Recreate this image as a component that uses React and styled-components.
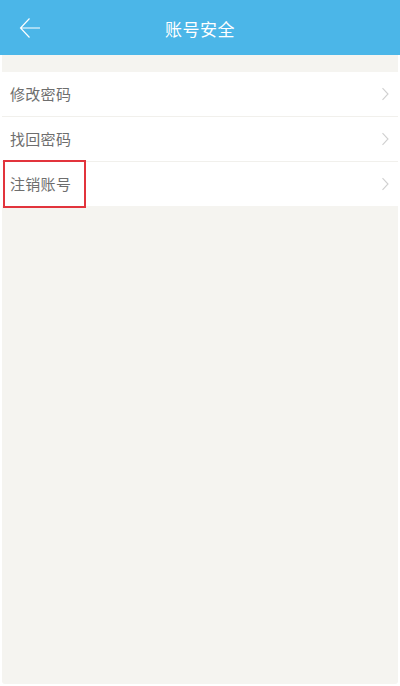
import React from "react";
import styled, { createGlobalStyle } from "styled-components";

const Global = createGlobalStyle`
  html, body { margin: 0; padding: 0; background: #ffffff; }
  body { font-family: "Noto Sans CJK SC", "Noto Sans", sans-serif; }
`;

const Screen = styled.div`
  width: 400px;
  height: 686px;
  display: flex;
  flex-direction: column;
  background: #ffffff;
  overflow: hidden;
`;

const Header = styled.header`
  height: 55px;
  flex: none;
  background: #4bb6e8;
  display: flex;
  align-items: center;
  justify-content: center;
  position: relative;
`;

const BackButton = styled.button`
  position: absolute;
  left: 18px;
  top: 16px;
  width: 24px;
  height: 24px;
  padding: 0;
  border: none;
  background: none;
  display: flex;
  align-items: center;
  justify-content: center;
`;

const Title = styled.h1`
  margin: 0;
  color: #ffffff;
  font-size: 17px;
  font-weight: 400;
  letter-spacing: 0.5px;
  line-height: 1;
  padding-top: 1px;
`;

const Body = styled.main`
  flex: 1;
  margin: 0 2px 2px 2px;
  background: #f5f4f0;
  border-radius: 0 0 3px 3px;
  padding-top: 17px;
  display: flex;
  flex-direction: column;
`;

const List = styled.ul`
  list-style: none;
  margin: 0;
  padding: 0;
  background: #ffffff;
`;

const Row = styled.li`
  height: 44px;
  display: flex;
  align-items: center;
  justify-content: space-between;
  padding: 0 8px 0 8px;
  position: relative;
  border-top: ${(p) => (p.$first ? "none" : "1px solid #f1f0ec")};
`;

const Highlight = styled.span`
  position: absolute;
  left: 1px;
  top: -2px;
  width: 83px;
  height: 48px;
  border: 2px solid #e2343c;
  box-sizing: border-box;
  pointer-events: none;
`;

const Label = styled.span`
  color: #6e6e6e;
  font-size: 15px;
  line-height: 1;
  letter-spacing: 0.3px;
  padding-bottom: 1px;
`;

const Chevron = () => (
  <svg width="9" height="14" viewBox="0 0 9 14">
    <path d="M1.5 1.2 L7 7 L1.5 12.8" fill="none" stroke="#d0d0d0" strokeWidth="1.1" />
  </svg>
);

const items = [
  { label: "修改密码" },
  { label: "找回密码" },
  { label: "注销账号", highlight: true },
];

export default function App() {
  return (
    <>
      <Global />
      <Screen>
        <Header>
          <BackButton aria-label="返回">
            <svg width="22" height="22" viewBox="0 0 22 22">
              <path
                d="M21 11 H1.5 M10.5 1.5 L1.5 11 L10.5 20.5"
                fill="none"
                stroke="#ffffff"
                strokeWidth="1.15"
              />
            </svg>
          </BackButton>
          <Title>账号安全</Title>
        </Header>
        <Body>
          <List>
            {items.map((it, i) => (
              <Row key={it.label} $first={i === 0}>
                {it.highlight && <Highlight />}
                <Label>{it.label}</Label>
                <Chevron />
              </Row>
            ))}
          </List>
        </Body>
      </Screen>
    </>
  );
}
